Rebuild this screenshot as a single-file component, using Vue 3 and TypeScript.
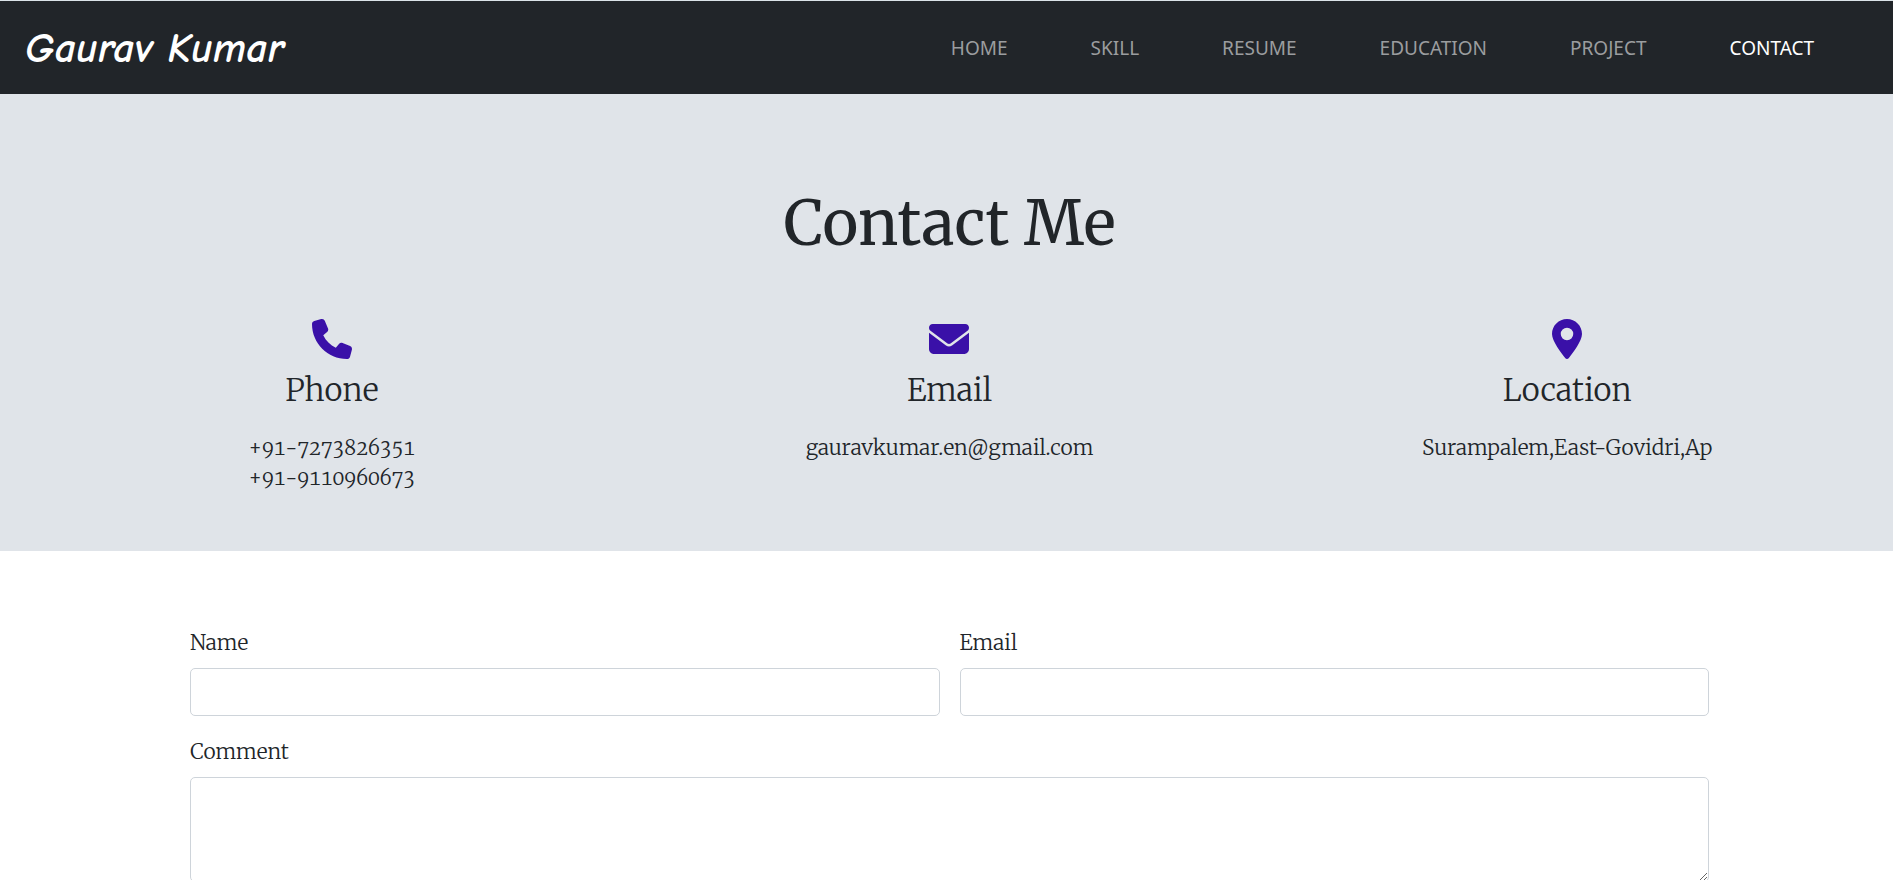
<script setup lang="ts">
import { ref } from 'vue'

interface NavItem {
  label: string
  href: string
}

interface ContactCard {
  title: string
  viewBox: string
  path: string
  lines: string[]
  numeric?: boolean
}

const navItems: NavItem[] = [
  { label: 'HOME', href: '#home' },
  { label: 'SKILL', href: '#skill' },
  { label: 'RESUME', href: '#resume' },
  { label: 'EDUCATION', href: '#education' },
  { label: 'PROJECT', href: '#project' },
  { label: 'CONTACT', href: '#contact' },
]

const active = ref('CONTACT')

const cards: ContactCard[] = [
  {
    title: 'Phone',
    viewBox: '0 0 512 512',
    path: 'M164.9 24.6c-7.7-18.600-28-28.500-47.400-23.200l-88 24C12.100 30.200 0 46 0 64C0 311.400 200.600 512 448 512c18 0 33.800-12.100 38.600-29.500l24-88c5.300-19.400-4.600-39.700-23.200-47.400l-96-40c-16.300-6.800-35.200-2.100-46.300 11.600L304.700 368C234.300 334.700 177.300 277.700 144 207.300L193.300 167c13.700-11.200 18.400-30 11.600-46.300l-40-96z',
    lines: ['+91-7273826351', '+91-9110960673'],
    numeric: true,
  },
  {
    title: 'Email',
    viewBox: '0 0 512 512',
    path: 'M48 64C21.500 64 0 85.500 0 112c0 15.100 7.100 29.300 19.200 38.400L236.800 313.600c11.400 8.500 27 8.500 38.400 0L492.800 150.400c12.100-9.100 19.200-23.300 19.200-38.400c0-26.500-21.500-48-48-48H48zM0 176V384c0 35.300 28.700 64 64 64H448c35.300 0 64-28.700 64-64V176L294.400 339.200c-22.800 17.100-54 17.100-76.800 0L0 176z',
    lines: ['gauravkumar.en@gmail.com'],
  },
  {
    title: 'Location',
    viewBox: '0 0 384 512',
    path: 'M215.700 499.200C267 435 384 279.400 384 192C384 86 298 0 192 0S0 86 0 192c0 87.400 117 243 168.300 307.200c12.300 15.300 35.100 15.300 47.400 0zM192 272a80 80 0 1 1 0-160 80 80 0 1 1 0 160z',
    lines: ['Surampalem,East-Govidri,Ap'],
  },
]

const form = ref({ name: '', email: '', comment: '' })
</script>

<template>
  <div class="page">
    <header class="navbar">
      <a class="brand" href="#home">Gaurav Kumar</a>
      <nav class="links">
        <a
          v-for="item in navItems"
          :key="item.label"
          :href="item.href"
          :class="['link', { active: item.label === active }]"
          @click="active = item.label"
          >{{ item.label }}</a
        >
      </nav>
    </header>

    <section class="contact">
      <h1>Contact Me</h1>
      <div class="cards">
        <article v-for="card in cards" :key="card.title" class="card">
          <svg class="icon" :viewBox="card.viewBox" aria-hidden="true">
            <path :d="card.path" />
          </svg>
          <h2>{{ card.title }}</h2>
          <p v-for="line in card.lines" :key="line" :class="{ numeric: card.numeric }">{{ line }}</p>
        </article>
      </div>
    </section>

    <form class="form" @submit.prevent>
      <div class="field">
        <label for="name">Name</label>
        <input id="name" v-model="form.name" type="text" />
      </div>
      <div class="field">
        <label for="email">Email</label>
        <input id="email" v-model="form.email" type="email" />
      </div>
      <div class="field wide">
        <label for="comment">Comment</label>
        <textarea id="comment" v-model="form.comment"></textarea>
      </div>
    </form>
  </div>
</template>

<style>
body {
  margin: 0;
  background: #fff;
}
</style>

<style scoped>
.page {
  font-family: 'Merriweather', 'DejaVu Serif Condensed', 'DejaVu Serif', serif;
  font-size: 21px;
  font-weight: 300;
  line-height: 30px;
  color: #212529;
}

.navbar {
  display: flex;
  align-items: center;
  justify-content: space-between;
  box-sizing: border-box;
  min-height: 94px;
  padding: 0 79px 0 25px;
  border-top: 1px solid #dbe3e8;
  background: #212529;
}

.brand {
  padding-top: 3px;
  font-family: 'Comic Sans MS', 'Comic Neue', 'Comic Relief', 'Lato', cursive;
  font-size: 42px;
  font-style: italic;
  font-weight: 700;
  line-height: 60px;
  color: #fff;
  text-decoration: none;
}

.links {
  display: flex;
  gap: 83px;
}

.link {
  font-family: 'Segoe UI', 'Selawik', 'Noto Sans', 'Open Sans', sans-serif;
  font-size: 19px;
  font-weight: 400;
  color: #9b9d9f;
  text-decoration: none;
}

.link.active {
  color: #fff;
}

.contact {
  padding: 90px 17px 58px 23px;
  background: #e0e4e9;
  text-align: center;
}

h1 {
  margin: 0;
  font-size: 61px;
  font-weight: 400;
  line-height: 80px;
}

.cards {
  display: grid;
  grid-template-columns: repeat(3, 1fr);
  margin-top: 55px;
}

.icon {
  display: block;
  height: 40px;
  margin: 0 auto;
  fill: #3a10a8;
}

h2 {
  margin: 11px 0 23px;
  font-size: 31px;
  font-weight: 300;
  line-height: 40px;
}

p {
  margin: 0;
}

.numeric {
  font-size: 20px;
  font-variant-numeric: oldstyle-nums tabular-nums;
}

.form {
  display: grid;
  grid-template-columns: 1fr 1fr;
  gap: 21px 20px;
  padding: 77px 184px 80px 190px;
}

.field {
  display: flex;
  flex-direction: column;
  gap: 10px;
}

.wide {
  grid-column: 1 / -1;
}

input,
textarea {
  box-sizing: border-box;
  width: 100%;
  height: 48px;
  padding: 8px 15px;
  border: 1px solid #ced4da;
  border-radius: 5px;
  background: #fff;
  font: inherit;
  color: inherit;
}

textarea {
  height: 105px;
  resize: vertical;
}
</style>
